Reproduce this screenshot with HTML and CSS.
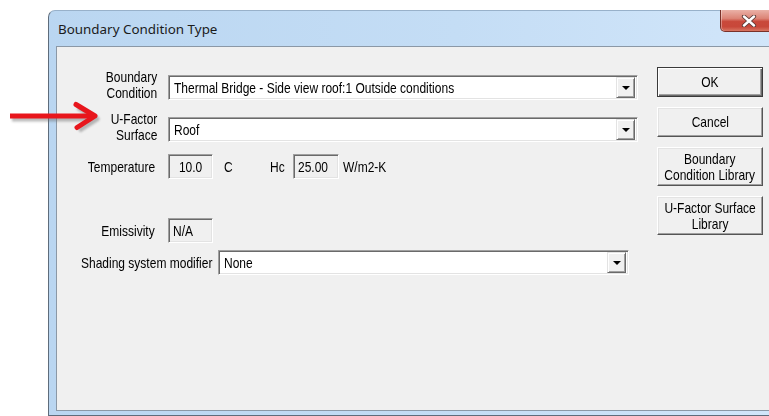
FILE: index.html
```html
<!DOCTYPE html>
<html>
<head>
<meta charset="utf-8">
<title>Boundary Condition Type</title>
<link rel="stylesheet" href="styles.css">
</head>
<body>
  <div class="window">
    <div class="titlebar">
      <span class="title">Boundary Condition Type</span>
      <div class="close-btn">
        <svg class="close-x" width="16" height="12" viewBox="0 0 16 12">
          <path d="M3 1.5 L13 10.5 M13 1.5 L3 10.5" stroke="#5a3a36" stroke-width="4.2" stroke-linecap="round"/>
          <path d="M3 1.5 L13 10.5 M13 1.5 L3 10.5" stroke="#ffffff" stroke-width="2.4" stroke-linecap="round"/>
        </svg>
      </div>
    </div>
    <div class="client">
      <div class="form">
        <div class="row">
          <div class="lbl lbl-two"><span class="t t-r">Boundary<br>Condition</span></div>
          <div class="combo combo-wide">
            <span class="combo-text"><span class="t">Thermal Bridge - Side view roof:1 Outside conditions</span></span>
            <span class="drop"><span class="tri"></span></span>
          </div>
        </div>
        <div class="row row-ufactor">
          <div class="lbl lbl-two"><span class="t t-r">U-Factor<br>Surface</span></div>
          <div class="combo combo-wide">
            <span class="combo-text"><span class="t">Roof</span></span>
            <span class="drop"><span class="tri"></span></span>
          </div>
        </div>
        <div class="row row-temp">
          <div class="lbl lbl-one"><span class="t t-r">Temperature</span></div>
          <div class="field field-center"><span class="t t-c">10.0</span></div>
          <span class="t unit unit-c">C</span>
          <span class="t unit unit-hc">Hc</span>
          <div class="field field-hc"><span class="t">25.00</span></div>
          <span class="t unit unit-w">W/m2-K</span>
        </div>
        <div class="row row-emis">
          <div class="lbl lbl-one"><span class="t t-r">Emissivity</span></div>
          <div class="field"><span class="t">N/A</span></div>
        </div>
        <div class="row row-shading">
          <div class="lbl-shading"><span class="t">Shading system modifier</span></div>
          <div class="combo combo-shading">
            <span class="combo-text"><span class="t">None</span></span>
            <span class="drop"><span class="tri"></span></span>
          </div>
        </div>
      </div>
      <div class="buttons">
        <div class="btn btn-default"><span class="t t-c">OK</span></div>
        <div class="btn"><span class="t t-c">Cancel</span></div>
        <div class="btn btn-tall"><span class="t t-c">Boundary<br>Condition Library</span></div>
        <div class="btn btn-tall"><span class="t t-c">U-Factor Surface<br>Library</span></div>
      </div>
    </div>
  </div>

  <svg class="arrow" width="110" height="45" viewBox="0 0 110 45">
    <defs>
      <filter id="soft" x="-10%" y="-30%" width="130%" height="170%">
        <feGaussianBlur stdDeviation="1.2"/>
      </filter>
    </defs>
    <g transform="translate(2 3)" opacity="0.45" filter="url(#soft)">
      <path d="M10 21 L92 21" stroke="#6b6b6b" stroke-width="5" fill="none"/>
      <path d="M76 9.5 L95 21 L77 32.5" stroke="#6b6b6b" stroke-width="5" fill="none" stroke-linejoin="round"/>
    </g>
    <path d="M10 21 L92 21" stroke="#e8161c" stroke-width="5" fill="none"/>
    <path d="M76 9.5 L95 21 L77 32.5" stroke="#e8161c" stroke-width="5" fill="none" stroke-linejoin="round" stroke-linecap="round"/>
  </svg>
</body>
</html>
```

FILE: styles.css
```css
body {
  margin: 0;
  width: 769px;
  height: 416px;
  overflow: hidden;
  position: relative;
  background: #ffffff;
  font-family: "Liberation Sans", Arial, sans-serif;
  font-size: 15px;
  color: #000000;
}

/* dialog text uses a tall, narrow face: scale the glyphs horizontally */
.t {
  display: inline-block;
  white-space: nowrap;
  transform: scaleX(0.8);
  transform-origin: left center;
}

.t-r { transform-origin: right center; }
.t-c { transform-origin: center center; }

/* ---- window frame ---- */
.window {
  margin: 10px 0 0 48px;
  width: 740px;
  height: 404px;
  border: 1px solid #5e6c7b;
  border-top-color: #98b1ca;
  border-right: none;
  border-radius: 7px 0 0 0;
  background: linear-gradient(to right, #bad6f1 0%, #c4ddf5 55%, #d2e6fa 100%);
  display: flex;
  flex-direction: column;
}

.titlebar {
  height: 35px;
  flex: none;
  display: flex;
  align-items: center;
  padding-left: 9px;
  position: relative;
}

.title {
  font-family: "Noto Sans", "Open Sans", sans-serif;
  font-size: 13.4px;
  color: #1b1b1b;
  padding-top: 1px;
}

.close-btn {
  position: absolute;
  left: 671px;
  top: -1px;
  width: 60px;
  height: 22px;
  box-sizing: border-box;
  border: 1px solid #7a3129;
  border-top: none;
  border-radius: 0 0 0 5px;
  background: linear-gradient(to bottom, #eab1a7 0%, #dc8476 40%, #c9493b 55%, #c8483a 80%, #d87662 100%);
  box-shadow: inset 1px 0 0 rgba(255, 255, 255, 0.35);
}

.close-x {
  position: absolute;
  left: 20px;
  top: 5px;
}

/* ---- client area ---- */
.client {
  flex: 1;
  margin: 0 0 4px 7px;
  border: 1px solid #8b98a6;
  border-right: none;
  background: #f0f0f0;
  display: flex;
  align-items: flex-start;
  padding-top: 20px;
}

.form {
  width: 590px;
  margin-top: 8px;
  display: flex;
  flex-direction: column;
}

.row {
  display: flex;
  align-items: center;
  height: 25px;
}

.row-ufactor { margin-top: 17px; }
.row-temp { margin-top: 12px; }
.row-emis { margin-top: 39px; }
.row-shading { margin-top: 7px; }

.lbl {
  width: 100px;
  flex: none;
  text-align: right;
  margin-right: 11px;
  line-height: 16px;
}

.lbl-two { margin-bottom: 5px; }
.lbl-one { width: 98px; margin-right: 13px; }

.lbl-shading {
  margin-left: 24px;
  width: 131px;
  flex: none;
  margin-right: 6px;
}

/* sunken 3D edge shared by combos and fields */
.combo,
.field {
  box-sizing: border-box;
  height: 25px;
  border: 1px solid;
  border-color: #a0a0a0 #ffffff #ffffff #a0a0a0;
  box-shadow: inset 1px 1px 0 #6a6a6a, inset -1px -1px 0 #e3e3e3;
}

.combo {
  flex: none;
  background: #ffffff;
  display: flex;
  align-items: center;
  padding: 2px 2px 2px 5px;
}

.combo-wide { width: 470px; }
.combo-shading { width: 411px; }

.combo-text {
  flex: 1;
  min-width: 0;
  white-space: nowrap;
}

.drop {
  flex: none;
  width: 19px;
  height: 21px;
  box-sizing: border-box;
  background: #f0f0f0;
  border: 1px solid;
  border-color: #e3e3e3 #6a6a6a #6a6a6a #e3e3e3;
  box-shadow: inset 1px 1px 0 #ffffff, inset -1px -1px 0 #a0a0a0;
  display: flex;
  align-items: center;
  justify-content: center;
}

.tri {
  width: 0;
  height: 0;
  border-left: 4px solid transparent;
  border-right: 4px solid transparent;
  border-top: 4px solid #000000;
  margin-top: 1px;
}

.field {
  width: 45px;
  flex: none;
  background: #f0f0f0;
  padding-left: 4px;
  display: flex;
  align-items: center;
}

.field-center {
  justify-content: center;
  padding-left: 0;
}

.field-hc { width: 46px; }

.unit { flex: none; }
.unit-c { margin-left: 11px; width: 46px; }
.unit-hc { width: 23px; }
.unit-w { margin-left: 4px; }

/* ---- command buttons ---- */
.buttons {
  margin-left: 10px;
  width: 106px;
  display: flex;
  flex-direction: column;
  gap: 10px;
}

.btn {
  box-sizing: border-box;
  height: 30px;
  background: #f0f0f0;
  border: 1px solid;
  border-color: #ffffff #555555 #555555 #ffffff;
  box-shadow: inset -1px -1px 0 #a0a0a0, inset 1px 1px 0 #e3e3e3;
  display: flex;
  align-items: center;
  justify-content: center;
  text-align: center;
  line-height: 16px;
}

.btn-default {
  border-color: #3a3a3a;
  box-shadow: inset 1px 1px 0 #ffffff, inset -1px -1px 0 #6a6a6a, inset -2px -2px 0 #a0a0a0;
}

.btn-tall { height: 39px; }

/* ---- callout arrow ---- */
.arrow {
  position: absolute;
  left: 0;
  top: 95px;
}
```
